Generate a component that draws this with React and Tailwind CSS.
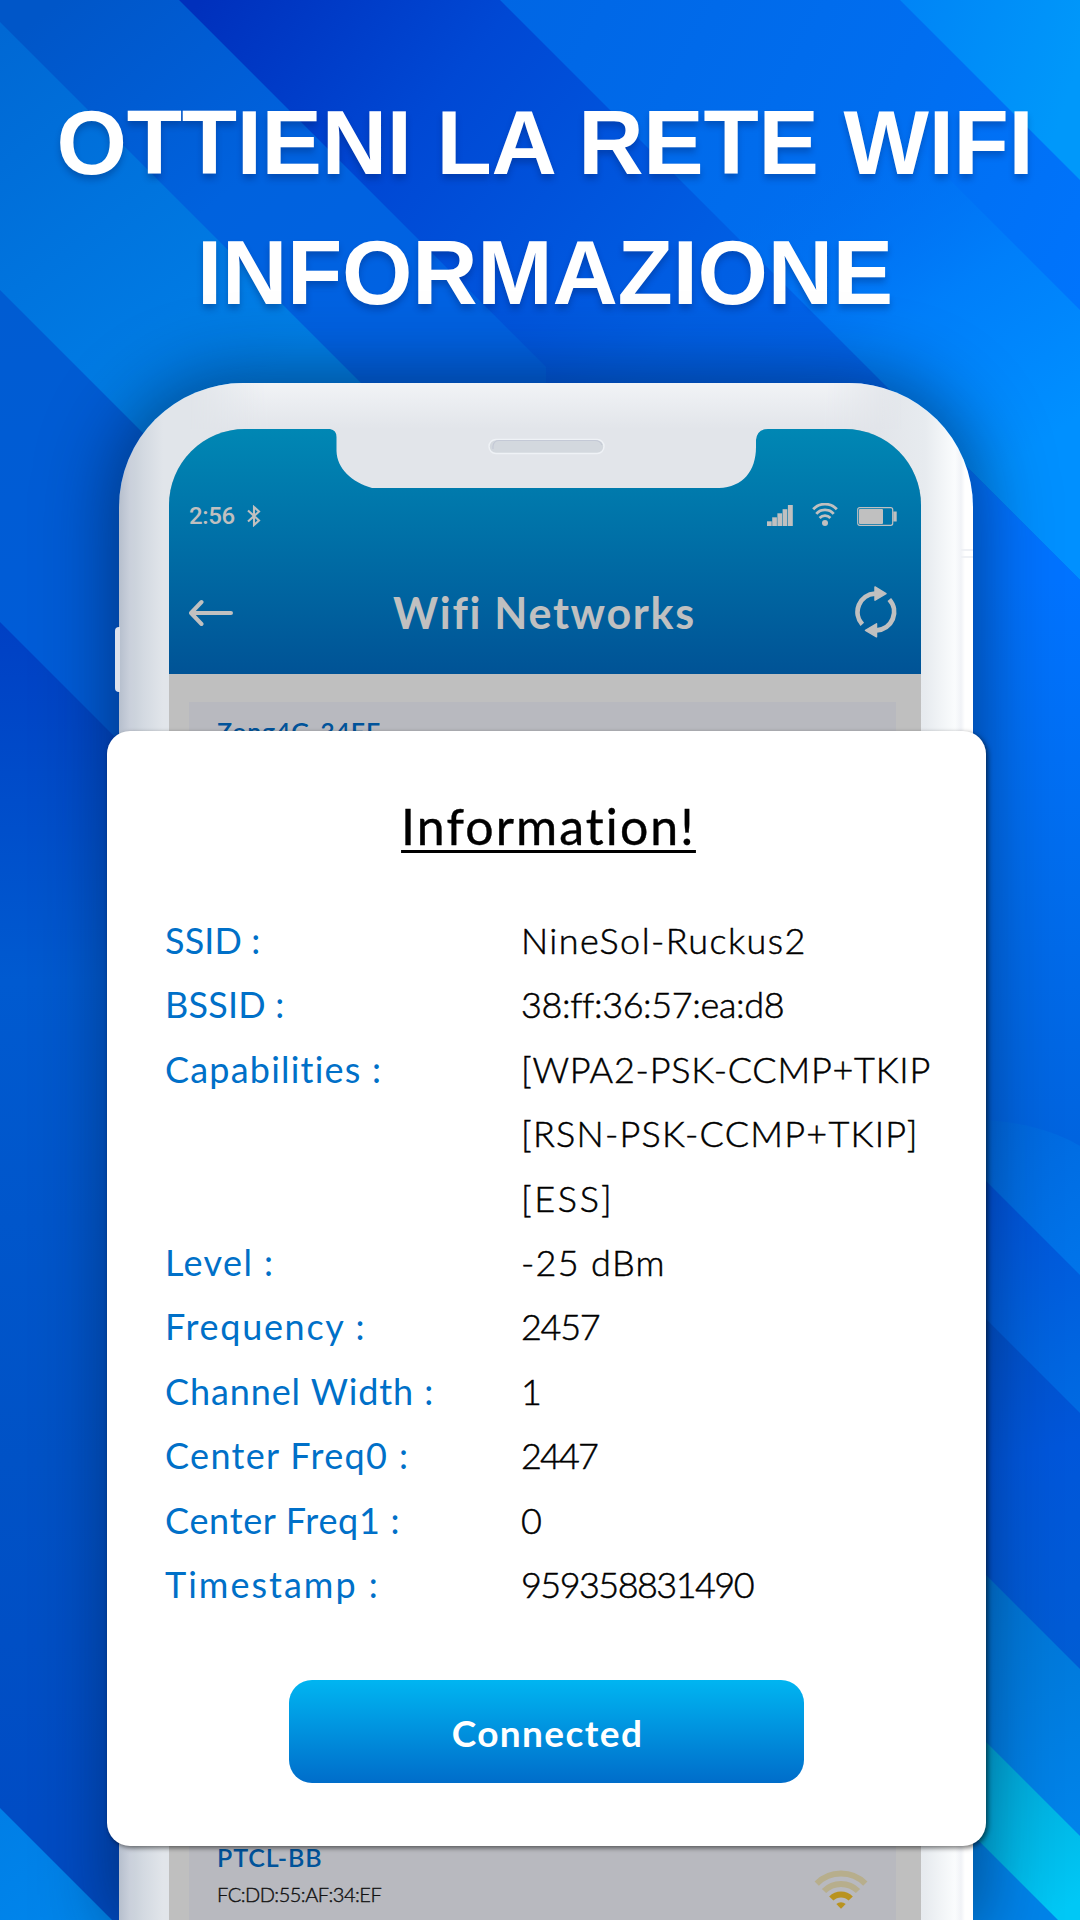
const details = [
  { label: 'SSID :', labelCls: 'tracking-[0.1px]', value: [['NineSol-Ruckus2', 'tracking-[1.45px]']] },
  { label: 'BSSID :', labelCls: 'tracking-[0.2px]', value: [['38:ff:36:57:ea:d8', 'tracking-[-0.4px]']] },
  {
    label: 'Capabilities :',
    labelCls: 'tracking-[1.2px]',
    value: [
      ['[WPA2-PSK-CCMP+TKIP', 'tracking-[0.75px]'],
      ['[RSN-PSK-CCMP+TKIP]', 'tracking-[1.25px]'],
      ['[ESS]', 'tracking-[2.6px]'],
    ],
  },
  { label: 'Level :', labelCls: 'tracking-[1.4px]', value: [['-25 dBm', 'tracking-[1.3px]']] },
  { label: 'Frequency :', labelCls: 'tracking-[1.7px]', value: [['2457', 'tracking-[-1.3px]']] },
  { label: 'Channel Width :', labelCls: 'tracking-[0.9px]', value: [['1', '']] },
  { label: 'Center Freq0 :', labelCls: 'tracking-[1.35px]', value: [['2447', 'tracking-[-1.9px]']] },
  { label: 'Center Freq1 :', labelCls: 'tracking-[0.7px]', value: [['0', '']] },
  { label: 'Timestamp :', labelCls: 'tracking-[2px]', value: [['959358831490', 'tracking-[-1.55px]']] },
];

// everything below the 45° line that crosses the top edge at x = c
function Band({ c, fill }) {
  return <polygon points={`${c},0 ${c + 1921},1921 -2100,1921 -2100,0`} fill={fill} />;
}

function Grad({ id, x1, y1, x2, y2, stops }) {
  return (
    <linearGradient id={id} gradientUnits="userSpaceOnUse" x1={x1} y1={y1} x2={x2} y2={y2}>
      {stops.map(([offset, color, opacity = 1]) => (
        <stop key={offset} offset={offset} stopColor={color} stopOpacity={opacity} />
      ))}
    </linearGradient>
  );
}

function Backdrop() {
  return (
    <svg className="absolute inset-0" width="1080" height="1920" viewBox="0 0 1080 1920">
      <defs>
        <clipPath id="left"><rect width="546" height="1920" /></clipPath>
        <clipPath id="right"><rect x="546" width="534" height="1920" /></clipPath>
        <Grad id="g1" x1={900} y1={0} x2={1080} y2={60} stops={[[0, '#0084f6'], [1, '#0098fa']]} />
        <Grad id="g2" x1={500} y1={0} x2={1080} y2={300} stops={[[0, '#0066e4'], [0.6, '#006ef0'], [1, '#0074fc']]} />
        <Grad id="g3" x1={860} y1={140} x2={1060} y2={430} stops={[[0, '#0070f0', 0], [0.5, '#0080fa', 0.9], [1, '#0090ff']]} />
        <Grad id="g4" x1={200} y1={0} x2={840} y2={520} stops={[[0, '#0030bc'], [0.3, '#0048d4'], [0.7, '#005fe4'], [1, '#0066ee']]} />
        <Grad id="g4r" x1={1080} y1={580} x2={1080} y2={1200} stops={[[0, '#0073ff'], [0.5, '#006cec'], [1, '#0062dc']]} />
        <Grad id="g5" x1={60} y1={0} x2={330} y2={330} stops={[[0, '#0056c8'], [0.6, '#0062de'], [1, '#0062e2']]} />
        <Grad id="g6" x1={0} y1={30} x2={260} y2={380} stops={[[0, '#0068d4'], [1, '#0080e8']]} />
        <Grad id="g7" x1={0} y1={300} x2={60} y2={700} stops={[[0, '#005cd2'], [1, '#005cd8']]} />
        <Grad id="g8" x1={0} y1={622} x2={0} y2={1820} stops={[[0, '#0040c4'], [0.3, '#005ad0'], [0.7, '#0052c6'], [1, '#004cc4']]} />
        <Grad id="g9" x1={0} y1={1808} x2={80} y2={1920} stops={[[0, '#007ee6'], [1, '#0086ec']]} />
        <Grad id="r1" x1={985} y1={1120} x2={1080} y2={1270} stops={[[0, '#0068de'], [1, '#0074ea']]} />
        <Grad id="r2" x1={985} y1={1180} x2={1080} y2={1410} stops={[[0, '#0052d8'], [1, '#006ae2']]} />
        <Grad id="r3" x1={985} y1={1320} x2={1080} y2={1660} stops={[[0, '#0050c8'], [0.4, '#0056da'], [1, '#005cd4']]} />
        <Grad id="r4" x1={985} y1={1580} x2={1080} y2={1830} stops={[[0, '#0074d4'], [1, '#0084ea']]} />
        <Grad id="r5" x1={985} y1={1745} x2={1080} y2={1900} stops={[[0, '#00a4d4'], [1, '#00c8f6']]} />
      </defs>
      <rect width="1080" height="1920" fill="url(#g1)" />
      <Band c={900} fill="url(#g2)" />
      <Band c={770} fill="url(#g3)" />
      <Band c={500} fill="url(#g4)" />
      <g clipPath="url(#left)">
        <Band c={179} fill="url(#g5)" />
        <Band c={-22} fill="url(#g6)" />
        <Band c={-290} fill="url(#g7)" />
        <Band c={-622} fill="url(#g8)" />
        <Band c={-1808} fill="url(#g9)" />
      </g>
      <g clipPath="url(#right)">
        <polygon points="900,400 1080,580 1080,1300 900,1300" fill="url(#g4r)" />
        <path d="M940 1119 Q1030 1116 1080 1146 V1400 H940Z" fill="url(#r1)" />
        <Band c={-195} fill="url(#r2)" />
        <Band c={-333} fill="url(#r3)" />
        <Band c={-589} fill="url(#r4)" />
        <Band c={-756} fill="url(#r5)" />
        <Band c={-862} fill="url(#r4)" />
      </g>
    </svg>
  );
}

function Notch() {
  return (
    <svg className="absolute top-0 left-[160px]" width="440" height="60" viewBox="0 0 440 60">
      <path
        d="M1 -1 V0 Q7.500 1 7.500 8 V22 C8 40 23 53 43 59 H390 C414 58 427 42 427 18 V11 Q428 0 439 0 V-1Z"
        fill="#e2e5ea"
      />
      <rect x="160" y="10.500" width="115" height="14" rx="7" fill="#d3d8de" stroke="#eff2f6" strokeWidth="1.500" />
      <path d="M164 20 V17 Q165 11.500 170 11.500 H266 Q271 11.500 273 16" fill="none" stroke="#c4c9d6" strokeWidth="1.200" />
    </svg>
  );
}

function BluetoothIcon() {
  return (
    <svg width="14" height="22" viewBox="0 0 14 22" fill="none" stroke="currentColor" strokeWidth="2.100">
      <path d="M1 5.500 L12 15.500 L7 20 V2 L12 6.500 L1 16.500" />
    </svg>
  );
}

function SignalIcon() {
  return (
    <svg width="26" height="21" viewBox="0 0 26 21" fill="currentColor">
      <rect x="0" y="16.300" width="4.700" height="4.700" />
      <rect x="5.200" y="12.300" width="4.700" height="8.700" />
      <rect x="10.400" y="8.300" width="4.700" height="12.700" />
      <rect x="15.600" y="4.200" width="4.700" height="16.800" />
      <rect x="20.900" y="0" width="4.900" height="21" />
    </svg>
  );
}

function StatusWifiIcon() {
  return (
    <svg width="26" height="23" viewBox="0 0 26 23" fill="none" stroke="currentColor" strokeWidth="2.800">
      <path d="M1.200 6.300 A16 16 0 0 1 24.800 6.300" />
      <path d="M4.300 10.800 A11.500 11.500 0 0 1 21.700 10.800" />
      <path d="M7.600 15 A7.400 7.400 0 0 1 18.400 15" />
      <circle cx="13" cy="20" r="3" fill="currentColor" stroke="none" />
    </svg>
  );
}

function BatteryIcon() {
  return (
    <svg width="40" height="19" viewBox="0 0 40 19">
      <rect x="0.700" y="0.700" width="35" height="17.600" rx="2" fill="none" stroke="currentColor" strokeWidth="1.200" />
      <rect x="2" y="2" width="24" height="15" rx="1" fill="currentColor" />
      <rect x="36.300" y="4.500" width="3.400" height="10" fill="currentColor" />
    </svg>
  );
}

function BackIcon() {
  return (
    <svg width="46" height="28" viewBox="0 0 46 28" fill="none" stroke="currentColor" strokeWidth="4" strokeLinecap="round" strokeLinejoin="round">
      <path d="M12.500 3 L2 14 L12.500 25 M3 14 H42" />
    </svg>
  );
}

function RefreshIcon() {
  return (
    <svg className="relative -top-px left-px" width="43" height="52" viewBox="0 0 43 52" fill="none" stroke="currentColor" strokeWidth="4.800">
      <path d="M7.300 38.300 A18.400 18.400 0 0 1 20 7.600" />
      <path d="M34.300 13.500 A18.400 18.400 0 0 1 21.500 44.300" />
      <path d="M20 1 L31 7.600 L20 14.200Z M21.500 37.800 L10.500 44.300 L21.500 50.800Z" fill="currentColor" strokeWidth="1.500" strokeLinejoin="round" />
    </svg>
  );
}

function NetworkWifiIcon() {
  return (
    <svg width="54" height="39" viewBox="0 0 54 39" fill="none" strokeWidth="6">
      <path d="M2.700 13.700 A34.300 34.300 0 0 1 51.300 13.700" stroke="#b7ae8c" />
      <path d="M10 21 A24 24 0 0 1 44 21" stroke="#b7ae8c" />
      <path d="M17.300 28.500 A13.700 13.700 0 0 1 36.700 28.500" stroke="#b9931f" />
      <path d="M27 38.700 L22.300 34 A7 7 0 0 1 31.700 34Z" fill="#b9931f" />
    </svg>
  );
}

function NetworkCard({ name, mac, nameCls }) {
  return (
    <div className="flex justify-between h-[120px] shrink-0 pl-[28px] pr-[28px] pt-[14px] bg-[#b8b9bf]">
      <div>
        <div className={`text-[25px] leading-[30px] font-semibold text-[#00539a] ${nameCls}`}>{name}</div>
        <div className="mt-[7px] text-[20px] leading-[30px] font-light tracking-[-0.5px] text-[#111] [-webkit-text-stroke:0.4px_#111]">
          {mac}
        </div>
      </div>
      <div className="pt-[28px]">
        <NetworkWifiIcon />
      </div>
    </div>
  );
}

function Phone() {
  return (
    <div className="relative ml-[119px] w-[854px] h-[1537px] rounded-t-[124px] pt-[46px] pl-[50px] pr-[52px] bg-[linear-gradient(to_right,#b6bfcd_0,#cad0db_11px,#ccd3dc_16px,#d3d9e1_24px,#e1e5ea_44px,#e2e5ea_760px,#e7ebef_806px,#fafcfd_836px,#f1f3f7_842px,#fff_846px)] shadow-[0_0_70px_8px_rgba(0,20,50,0.5)]">
      {/* top bezel highlight */}
      <div className="absolute inset-x-0 top-0 h-[160px] rounded-t-[124px] overflow-hidden">
        <div className="mx-[70px] h-[46px] bg-linear-to-b from-[#f1f3f6] to-[#e2e5ea] [mask-image:linear-gradient(to_right,transparent,black_80px,black_634px,transparent)]" />
      </div>
      {/* side button and antenna line */}
      <div className="absolute left-[-4px] top-[244px] w-[5px] h-[65px] rounded-l-sm bg-[#dde2ec]" />
      <div className="absolute right-0 top-[166px] w-[12px] h-[9px] border-y-2 border-[#eff1f5]" />

      <div className="relative flex flex-col h-full rounded-t-[76px] overflow-hidden bg-[#bfbfbf] font-[Lato,sans-serif]">
        <header className="relative shrink-0 h-[245px] pt-[72px] pl-[20px] pr-[24px] text-[#c0c0c0] bg-linear-to-b from-[#0087b4] to-[#005396]">
          <Notch />
          <div className="flex justify-between h-[30px]">
            <div className="flex items-center gap-[12px]">
              <span className="text-[24px] leading-[30px] font-medium tracking-[-0.4px] font-[Roboto,sans-serif]">2:56</span>
              <BluetoothIcon />
            </div>
            <div className="flex items-end pb-[5px]">
              <SignalIcon />
              <span className="w-[19px]" />
              <StatusWifiIcon />
              <span className="w-[19px]" />
              <BatteryIcon />
            </div>
          </div>
          <div className="mt-[52px] flex items-center justify-between h-[60px]">
            <BackIcon />
            <h2 className="text-[43px] leading-[60px] font-bold tracking-[1.7px]">Wifi Networks</h2>
            <RefreshIcon />
          </div>
        </header>
        <div className="flex flex-col gap-[1006px] pt-[28px] pl-[20px] pr-[25px]">
          <NetworkCard name="Zong4G-34EF" mac="" nameCls="tracking-[0.76px]" />
          <NetworkCard name="PTCL-BB" mac="FC:DD:55:AF:34:EF" nameCls="tracking-[0.9px]" />
        </div>
      </div>
    </div>
  );
}

function InfoDialog() {
  return (
    <div className="absolute left-[107px] top-[731px] w-[879px] h-[1115px] rounded-[23px] bg-white shadow-[2px_2px_5px_rgba(0,0,0,0.55)] flex flex-col font-[Lato,sans-serif]">
      <h3 className="mt-[65px] ml-[4px] self-center text-[50px] leading-[60px] tracking-[2.1px] text-black underline decoration-[2.5px] underline-offset-[5px] [text-decoration-skip-ink:none] [-webkit-text-stroke:0.4px_black]">
        Information!
      </h3>
      <dl className="mt-[52px] pl-[58px] flex flex-col text-[36px] leading-[64.4px]">
        {details.map((d) => (
          <div key={d.label} className="flex">
            <dt className={`w-[356px] shrink-0 text-[#0070c8] ${d.labelCls}`}>{d.label}</dt>
            <dd className="font-light text-black whitespace-nowrap [-webkit-text-stroke:0.5px_black]">
              {d.value.map(([line, cls]) => (
                <div key={line} className={cls}>{line}</div>
              ))}
            </dd>
          </div>
        ))}
      </dl>
      <button className="mt-[64px] ml-[182px] w-[515px] h-[103px] pt-[2px] pl-[2px] rounded-[23px] bg-linear-to-b from-[#00b5f1] to-[#006dca] text-white text-[37px] font-bold tracking-[1.4px]">
        Connected
      </button>
    </div>
  );
}

export default function App() {
  return (
    <main className="relative w-[1080px] h-[1920px] overflow-hidden bg-[#0060e0]">
      <Backdrop />
      <h1 className="relative pt-[78px] pl-[10px] h-[383px] text-center text-white text-[90.5px] leading-[130px] tracking-[-0.25px] font-bold font-['Liberation_Sans',Arial,sans-serif] [text-shadow:0_5px_6px_rgba(0,20,80,0.28)]">
        OTTIENI LA RETE WIFI
        <br />
        INFORMAZIONE
      </h1>
      <Phone />
      <InfoDialog />
    </main>
  );
}
